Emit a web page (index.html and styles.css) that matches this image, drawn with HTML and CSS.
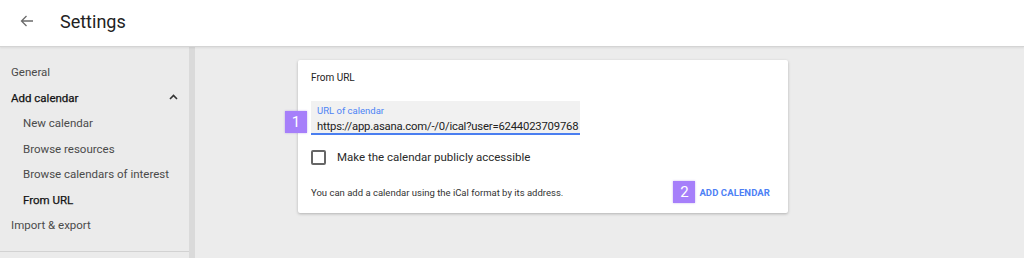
FILE: index.html
```html
<!DOCTYPE html>
<html>
<head>
<meta charset="utf-8">
<link rel="stylesheet" href="styles.css">
</head>
<body>
<header class="topbar">
  <svg class="back" width="14" height="12" viewBox="0 0 14 12"><path d="M13 6H1.5M6.5 1L1.5 6l5 5" fill="none" stroke="#6b6b6b" stroke-width="1.3"/></svg>
  <h1 class="title">Settings</h1>
</header>
<div class="layout">
  <nav class="sidebar">
    <ul class="nav">
      <li class="item">General</li>
      <li class="item strong group">Add calendar
        <svg class="chev" width="9" height="6" viewBox="0 0 9 6"><path d="M1 5L4.5 1.5L8 5" fill="none" stroke="#333" stroke-width="1.6"/></svg>
      </li>
      <li class="item sub">New calendar</li>
      <li class="item sub">Browse resources</li>
      <li class="item sub">Browse calendars of interest</li>
      <li class="item sub strong">From URL</li>
      <li class="item">Import &amp; export</li>
    </ul>
    <div class="navline"></div>
  </nav>
  <div class="strip"></div>
  <main class="main">
    <section class="card">
      <div class="card-title">From URL</div>
      <div class="field">
        <span class="badge b1">1</span>
        <div class="label">URL of calendar</div>
        <div class="value">https://app.asana.com/-/0/ical?user=6244023709768</div>
      </div>
      <label class="check">
        <span class="box"></span>
        <span class="check-text">Make the calendar publicly accessible</span>
      </label>
      <div class="footer">
        <span class="hint">You can add a calendar using the iCal format by its address.</span>
        <span class="action"><span class="badge b2">2</span><span class="btn">ADD CALENDAR</span></span>
      </div>
    </section>
  </main>
</div>
</body>
</html>
```
FILE: styles.css
```css
html, body { margin: 0; padding: 0; }
body {
  width: 1024px; height: 258px; overflow: hidden;
  font-family: Roboto, "Liberation Sans", Arial, sans-serif;
  background: #ececec;
  color: #333;
}
.topbar {
  height: 46px;
  background: #fff;
  display: flex; align-items: center;
  border-bottom: 1px solid #d4d4d4;
  box-shadow: 0 1px 2px rgba(0,0,0,0.08);
  position: relative; z-index: 1;
}
.back { margin-left: 20px; margin-top: -4px; }
.title {
  margin: 0 0 0 26px;
  font-size: 18px; font-weight: 400; color: #222;
  margin-top: -4px;
}
.layout { display: flex; height: 211px; }
.sidebar {
  width: 189px; background: #ebebeb;
  display: flex; flex-direction: column;
}
.nav { list-style: none; margin: 0; padding: 13px 0 0 0; }
.item {
  height: 25.5px; line-height: 25.5px;
  font-size: 11.5px; color: #4a4a4a;
  padding-left: 11px;
  display: flex; align-items: center;
}
.item.sub { padding-left: 23px; }
.item.strong { color: #141414; font-weight: 400; -webkit-text-stroke: 0.25px #141414; }
.group { justify-content: space-between; padding-right: 11px; }
.chev { margin-top: -2px; }
.navline { margin-top: 12px; height: 1px; background: #d2d2d2; }
.strip { width: 6px; background: #dadada; }
.main { flex: 1; padding: 13px 0 0 103px; }
.card {
  width: 490px; height: 153px; box-sizing: border-box;
  background: #fff;
  box-shadow: 0 1px 3px rgba(0,0,0,0.25);
  border-radius: 2px;
  padding: 12px 18px 0 13px;
}
.card-title { font-size: 10px; color: #222; line-height: 12px; }
.field {
  position: relative;
  margin-top: 17px;
  width: 269px; height: 34px;
  background: #f1f1f1;
  border-bottom: 2px solid #4a7ef0;
  box-sizing: border-box;
  padding: 4px 0 0 6px;
}
.label { font-size: 9.5px; color: #4d84f5; line-height: 12px; }
.value {
  font-size: 11.3px; letter-spacing: -0.2px; color: #222; line-height: 15px; margin-top: 2px;
  white-space: nowrap;
}
.badge {
  display: inline-flex; align-items: center; justify-content: center;
  width: 22px; height: 22px;
  background: #a67ffa; color: #fff;
  font-size: 15px; font-weight: 400;
  box-shadow: 0 0 2px rgba(120,80,220,0.4);
}
.b1 { position: absolute; left: -26px; top: 10px; }
.check { display: flex; align-items: center; margin-top: 14px; height: 16px; }
.box {
  width: 11px; height: 11px;
  border: 2px solid #666; border-radius: 2px;
}
.check-text { margin-left: 11px; font-size: 11.5px; color: #2a2a2a; }
.footer {
  display: flex; justify-content: space-between; align-items: center;
  margin-top: 16px; height: 22px;
}
.hint { font-size: 9.5px; color: #333; }
.action { display: flex; align-items: center; }
.btn { margin-left: 4px; font-size: 9.5px; font-weight: 700; color: #4d7ff5; letter-spacing: 0.1px; }
```
